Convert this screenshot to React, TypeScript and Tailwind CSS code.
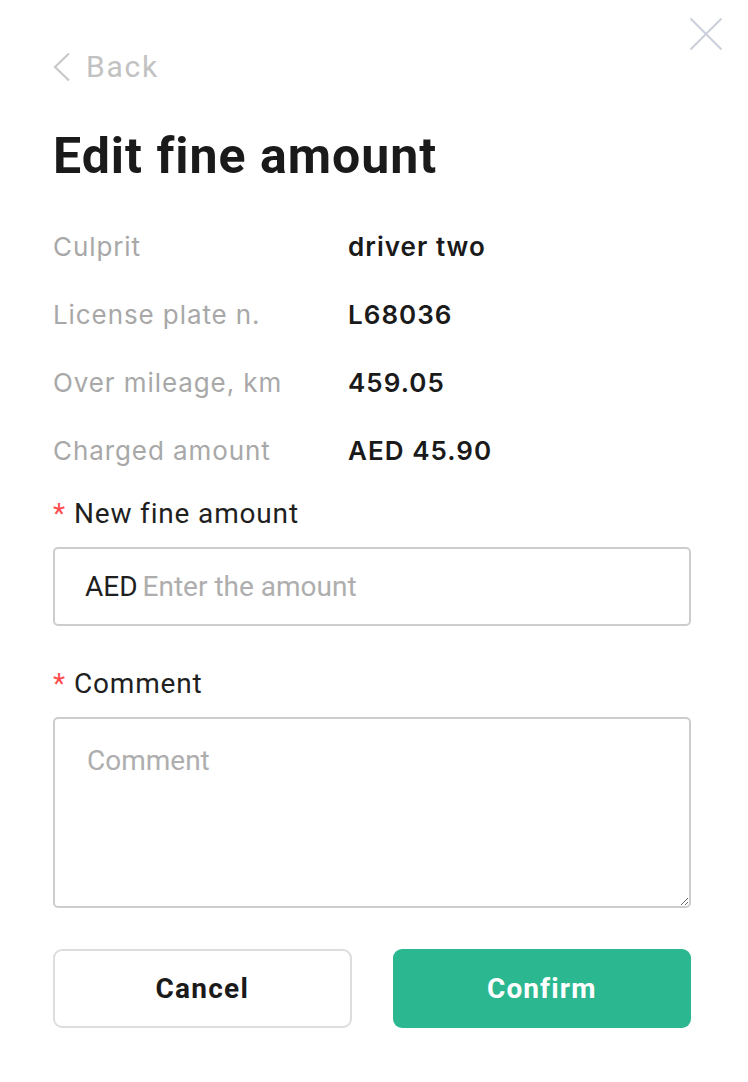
import { useState } from "react";

const details = [
  { label: "Culprit", value: "driver two" },
  { label: "License plate n.", value: "L68036" },
  { label: "Over mileage, km", value: "459.05" },
  { label: "Charged amount", value: "AED 45.90" },
];

function RequiredLabel({ children }: { children: string }) {
  return (
    <div className="flex items-center h-[36px] text-[28px] leading-[36px] tracking-[0.03em] text-[#1f1f1f]">
      <span className="text-[#ff4d4f] mr-[8px]">*</span>
      {children}
    </div>
  );
}

export default function App() {
  const [amount, setAmount] = useState("");
  const [comment, setComment] = useState("");

  return (
    <div className="relative min-h-[1082px] bg-white font-['Roboto',sans-serif] pl-[53px] pr-[57px] pt-[49px] pb-[54px]">
      {/* Close */}
      <button className="absolute top-[17px] right-[25px] w-[34px] h-[34px] flex items-center justify-center">
        <svg width="34" height="34" viewBox="0 0 34 34" fill="none">
          <path d="M1.5 1.5L32.5 32.5M32.5 1.5L1.5 32.5" stroke="#cbd0dc" strokeWidth="2" />
        </svg>
      </button>

      {/* Back */}
      <button className="flex items-center h-[36px] text-[30px] leading-[36px] tracking-[0.06em] text-[#c2c2c2]">
        <svg width="18" height="30" viewBox="0 0 18 30" fill="none" className="mr-[15px]">
          <path d="M16 1.5L2 15L16 28.5" stroke="#c8c8c8" strokeWidth="2.2" />
        </svg>
        Back
      </button>

      <h1 className="mt-[43px] text-[50px] leading-[56px] tracking-[0.02em] font-bold text-[#1a1a1a]">
        Edit fine amount
      </h1>

      {/* Fine details */}
      <div className="mt-[45px] flex flex-col gap-[32px] font-['Inter',sans-serif] text-[26px] leading-[36px]">
        {details.map((row) => (
          <div key={row.label} className="flex">
            <span className="w-[295px] tracking-[0.035em] text-[#a8a8a8]">{row.label}</span>
            <span className="font-semibold tracking-[0.04em] text-[#1a1a1a]">{row.value}</span>
          </div>
        ))}
      </div>

      <div className="mt-[27px]">
        <RequiredLabel>New fine amount</RequiredLabel>
        <div className="mt-[15px] h-[79px] flex items-center gap-[5px] border-2 border-[#cdcdcd] rounded-[5px] px-[30px] text-[28px]">
          <span className="text-[#1f1f1f]">AED</span>
          <input
            value={amount}
            onChange={(e) => setAmount(e.target.value)}
            placeholder="Enter the amount"
            className="flex-1 min-w-0 outline-none bg-transparent text-[#1f1f1f] placeholder:text-[#aeaeae]"
          />
        </div>
      </div>

      <div className="mt-[40px]">
        <RequiredLabel>Comment</RequiredLabel>
        <textarea
          value={comment}
          onChange={(e) => setComment(e.target.value)}
          placeholder="Comment"
          className="mt-[15px] block w-full h-[191px] border-2 border-[#cdcdcd] rounded-[5px] px-[32px] py-[24px] text-[28px] leading-[36px] outline-none text-[#1f1f1f] placeholder:text-[#aeaeae]"
        />
      </div>

      <div className="mt-[41px] grid grid-cols-2 gap-[41px]">
        <button className="h-[79px] border-2 border-[#dddddd] rounded-[9px] text-[28px] font-bold tracking-[0.045em] text-[#1a1a1a]">
          Cancel
        </button>
        <button className="h-[79px] rounded-[9px] bg-[#2bb890] text-[28px] font-bold tracking-[0.04em] text-white">
          Confirm
        </button>
      </div>
    </div>
  );
}
